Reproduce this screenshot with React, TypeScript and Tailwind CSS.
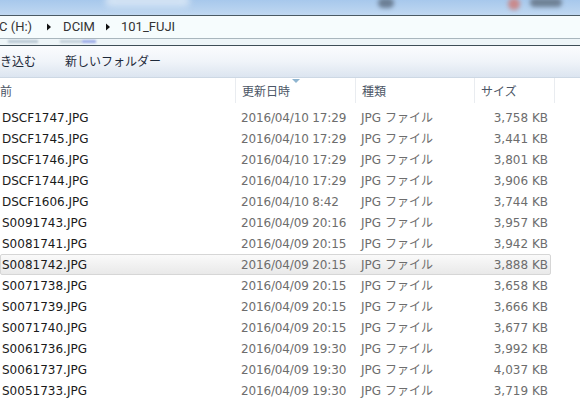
import React from "react";

const files = [
  ["DSCF1747.JPG", "2016/04/10 17:29", "3,758 KB"],
  ["DSCF1745.JPG", "2016/04/10 17:29", "3,441 KB"],
  ["DSCF1746.JPG", "2016/04/10 17:29", "3,801 KB"],
  ["DSCF1744.JPG", "2016/04/10 17:29", "3,906 KB"],
  ["DSCF1606.JPG", "2016/04/10 8:42", "3,744 KB"],
  ["S0091743.JPG", "2016/04/09 20:16", "3,957 KB"],
  ["S0081741.JPG", "2016/04/09 20:15", "3,942 KB"],
  ["S0081742.JPG", "2016/04/09 20:15", "3,888 KB"],
  ["S0071738.JPG", "2016/04/09 20:15", "3,658 KB"],
  ["S0071739.JPG", "2016/04/09 20:15", "3,666 KB"],
  ["S0071740.JPG", "2016/04/09 20:15", "3,677 KB"],
  ["S0061736.JPG", "2016/04/09 19:30", "3,992 KB"],
  ["S0061737.JPG", "2016/04/09 19:30", "4,037 KB"],
  ["S0051733.JPG", "2016/04/09 19:30", "3,719 KB"],
];

const font = "font-['DejaVu_Sans','Noto_Sans_CJK_JP',sans-serif]";

function Crumb({ first }: { first?: boolean }) {
  return (
    <svg
      width="4"
      height="8"
      viewBox="0 0 4 8"
      className={first ? "ml-[15px] mr-[12px]" : "ml-[11px] mr-[11px]"}
    >
      <path d="M0 0.5 L4 4 L0 7.5 Z" fill="#111" />
    </svg>
  );
}

export default function App() {
  return (
    <div className={`w-[580px] h-[404px] overflow-hidden bg-white text-[12px] ${font}`}>
      {/* title bar */}
      <div className="relative h-[15px] bg-gradient-to-b from-[#a7c8ec] to-[#c0d8f1] overflow-hidden">
        <div className="absolute left-[105px] top-[-5px] w-[85px] h-[12px] rounded-full bg-[#d3e3f4] blur-[3px]" />
        <div className="absolute left-[378px] top-[-2px] w-[16px] h-[10px] rounded-full bg-[#6c7f95] blur-[2px]" />
        <div className="absolute left-[508px] top-[-2px] w-[12px] h-[12px] rounded-full bg-[#c98a8c] blur-[2px]" />
        <div className="absolute left-[530px] top-[-2px] w-[32px] h-[9px] rounded-full bg-[#6f8195] blur-[2px]" />
      </div>
      {/* address bar */}
      <div className="h-[1px] bg-[#4a5a64]" />
      <div className="h-[22px] bg-[#f6fcfd] flex items-center text-[13px] text-[#333] font-['Roboto',sans-serif]">
        <span className="-ml-[1px]">C (H:)</span>
        <Crumb first />
        <span>DCIM</span>
        <Crumb />
        <span>101_FUJI</span>
      </div>
      <div className="h-[1px] bg-[#a9b6bd]" />
      <div className="relative h-[6px] bg-[#eef5f8] overflow-hidden">
        <div className="absolute left-[8px] top-[1px] w-[30px] h-[3px] bg-[#b9c6d2] blur-[1px]" />
        <div className="absolute left-[60px] top-[1px] w-[22px] h-[3px] bg-[#c3ced8] blur-[1px]" />
        <div className="absolute left-[82px] top-[1px] w-[14px] h-[3px] bg-[#9aa8e6] blur-[1px]" />
      </div>
      <div className="h-[1px] bg-[#3f4e57]" />
      {/* toolbar */}
      <div className="h-[32px] flex items-center bg-gradient-to-b from-[#fbfcfe] via-[#f0f4f9] to-[#dce5f0] text-[#1e2a3a] border-b border-[#cdd8e4]">
        <span>き込む</span>
        <span className="ml-[29px]">新しいフォルダー</span>
      </div>
      {/* header */}
      <div className="relative h-[25px] flex text-[#4c5666]">
        <div className="w-[236px] pt-[5px] border-r border-[#e9ecf0]">前</div>
        <div className="w-[120px] pl-[6px] pt-[5px] border-r border-[#e9ecf0]">更新日時</div>
        <div className="w-[119px] pl-[6px] pt-[5px] border-r border-[#e9ecf0]">種類</div>
        <div className="w-[80px] pl-[6px] pt-[5px] border-r border-[#e9ecf0]">サイズ</div>
        <svg width="8" height="4" viewBox="0 0 8 4" className="absolute left-[292px] top-[1px]">
          <path d="M0 0 L8 0 L4 4 Z" fill="#8fb5d0" />
        </svg>
      </div>
      {/* rows */}
      <div className="pt-[4px]">
        {files.map(([name, date, size], i) => (
          <div
            key={name}
            className={`h-[21px] w-[551px] flex items-center rounded-[2px] border ${
              i === 7
                ? "border-[#d6d6d6] bg-gradient-to-b from-[#fafafa] to-[#e9e9e9]"
                : "border-transparent"
            }`}
          >
            <span className="w-[240px] pl-[1px] text-[#1a1a1a]">{name}</span>
            <span className="w-[120px] text-[#6d6d6d] tracking-[-0.15px]">{date}</span>
            <span className="w-[110px] text-[#6d6d6d]">JPG ファイル</span>
            <span className="flex-1 text-right pr-[2px] text-[#6d6d6d]">{size}</span>
          </div>
        ))}
      </div>
    </div>
  );
}
